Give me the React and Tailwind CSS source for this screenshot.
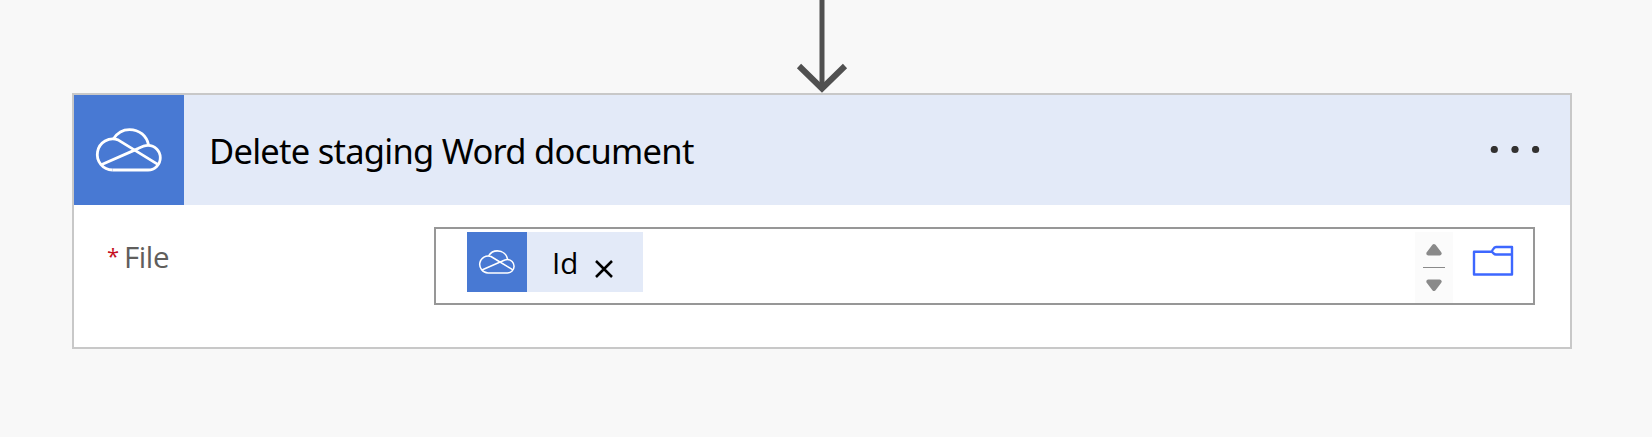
function CloudIcon({ className }) {
  return (
    <svg viewBox="0 0 110 110" className={className} fill="none" stroke="#fff" strokeWidth="2.8" strokeLinejoin="round">
      <path d="M38.5 75A15.5 15.5 0 1 1 44 44.9L84.2 69.6" />
      <path d="M39.6 43.8C43 38.2 48.5 34.6 55.5 34.6C65.5 34.6 72.8 41 74.6 50.2" />
      <path d="M27.3 69.8L64 53.6C67 52 70 50.4 74 50.4A12.3 12.3 0 0 1 74 75H38.5" />
    </svg>
  );
}

function Arrow() {
  return (
    <svg className="block h-[93px] w-[60px]" viewBox="0 0 60 93" fill="none" stroke="#505050" strokeWidth="6">
      <path d="M30 0V89" strokeWidth="5" />
      <path d="M7 66L30 88.5L53 66" />
    </svg>
  );
}

function Stepper() {
  return (
    <div className="flex h-[71px] w-[38px] justify-center bg-[#fbfbfb]">
      <svg className="block h-[71px] w-[22px]" viewBox="0 0 22 71" fill="#8a8a8a" stroke="#8a8a8a" strokeLinejoin="round">
        <path d="M11 14L16.7 21.4H5.3Z" strokeWidth="4" />
        <path d="M0 35.5H22" strokeWidth="1" />
        <path d="M11 57L16.7 49.6H5.3Z" strokeWidth="4" />
      </svg>
    </div>
  );
}

function FolderIcon() {
  return (
    <svg className="block h-[32px] w-[42px]" viewBox="0 0 42 32" fill="none" stroke="#3d67ff" strokeWidth="2.4" strokeLinejoin="round">
      <path d="M20.4 6.8H2V29.5H40V2H24C22 2 21.2 4.2 20.2 5.7C19.4 6.6 19.6 7 20.6 7.5C21.8 8.3 22 9.5 24 9.5H40" />
    </svg>
  );
}

export default function App() {
  return (
    <div className="flex h-[437px] w-[1652px] flex-col overflow-hidden bg-[#f8f8f8] pl-[72px] font-['Open_Sans','Noto_Sans',sans-serif]">
      <div className="flex w-[1500px] justify-center">
        <Arrow />
      </div>
      <section className="h-[256px] w-[1500px] border-2 border-[#c8c8c8] bg-white">
        <header className="flex h-[110px] items-center bg-[#e3eaf8]">
          <div className="size-[110px] bg-[#4879d3]">
            <CloudIcon className="size-[110px]" />
          </div>
          <h1 className="ml-[25px] h-[54px] font-['Noto_Sans','Open_Sans',sans-serif] text-[34.5px] leading-[56px] tracking-[-0.74px] whitespace-nowrap text-black">
            Delete staging Word document
          </h1>
          <svg className="mr-[30px] ml-auto block h-[8px] w-[50px]" viewBox="0 0 50 8" fill="#323130">
            <circle cx="4.3" cy="3.5" r="3.6" />
            <circle cx="25" cy="3.5" r="3.6" />
            <circle cx="45.6" cy="3.5" r="3.6" />
          </svg>
        </header>
        <div className="flex pt-[22px]">
          <div className="flex w-[360px] pl-[33px] text-[29.5px] leading-[60px]">
            <span className="w-[17px] text-[22px] leading-[57px] text-[#c50f1f]">*</span>
            <span className="tracking-[-0.4px] text-[#605e5c]">File</span>
          </div>
          <div className="flex h-[78px] w-[1101px] border-2 border-[#979797] pt-[3px] pl-[31px]">
            <div className="flex h-[60px] w-[176px] bg-[#e3eaf8]">
              <div className="size-[60px] bg-[#4879d3]">
                <CloudIcon className="size-[60px]" />
              </div>
              <span className="ml-[25px] w-[43px] text-[29.5px] leading-[62px] text-black">Id</span>
              <svg className="mt-[28px] block h-[18px] w-[18px]" viewBox="0 0 18 18" fill="none" stroke="#000" strokeWidth="2.5">
                <path d="M1 1L17 17M17 1L1 17" />
              </svg>
            </div>
            <div className="ml-auto flex">
              <Stepper />
              <div className="pt-[13px] pr-[19px] pl-[19px]">
                <FolderIcon />
              </div>
            </div>
          </div>
        </div>
      </section>
    </div>
  );
}
